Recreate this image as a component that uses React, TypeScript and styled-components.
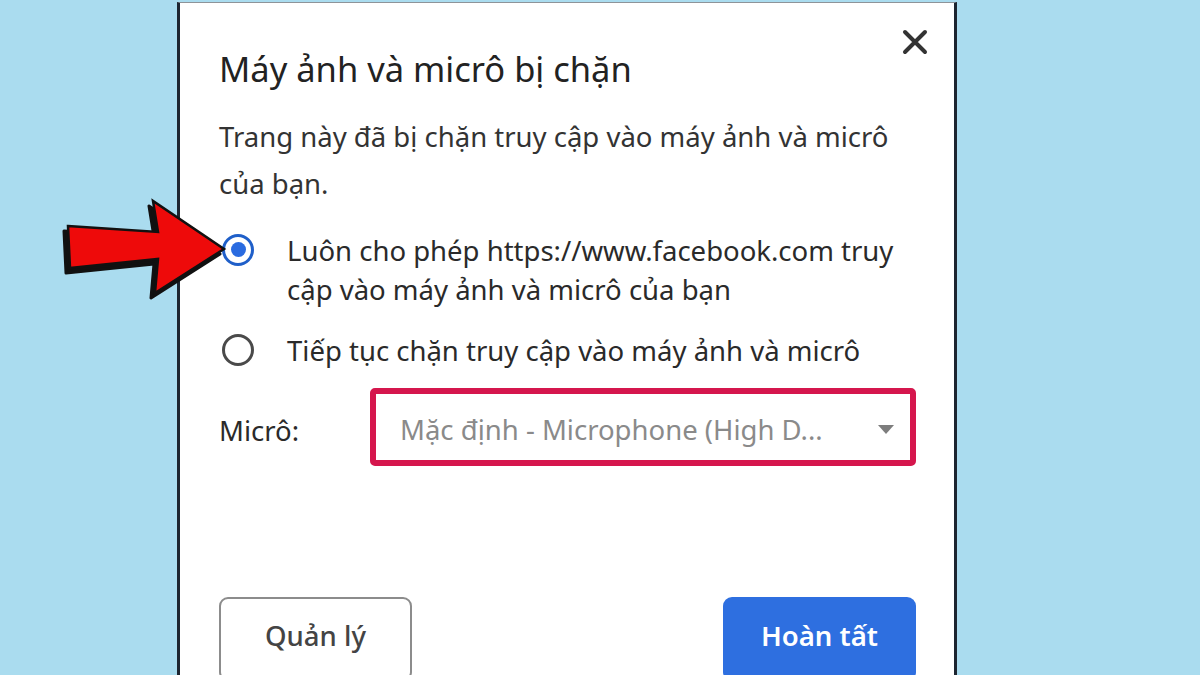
import React from "react";
import styled, { createGlobalStyle } from "styled-components";

const GlobalStyle = createGlobalStyle`
    html, body {
        margin: 0;
        padding: 0;
        background: #aadcef;
    }
    body {
        font-family: "Noto Sans", "Open Sans", Arial, sans-serif;
        color: #2b2b2b;
    }
`;

const Page = styled.div`
    position: relative;
    width: 1200px;
    height: 675px;
    overflow: hidden;
    background: #aadcef;
    display: flex;
    align-items: flex-start;
`;

// dialog runs past the bottom edge of the screenshot
const Dialog = styled.div`
    margin: 2px 0 0 177px;
    width: 780px;
    height: 700px;
    box-sizing: border-box;
    background: #fff;
    border-left: 3px solid #1d2530;
    border-right: 3px solid #1d2530;
    border-top: 1px solid #8e9499;
    padding: 0 38px 0 39px;
    display: flex;
    flex-direction: column;
`;

const Header = styled.div`
    display: flex;
    justify-content: space-between;
    align-items: flex-start;
`;

const Title = styled.h1`
    margin: 46px 0 0;
    font-size: 34.5px;
    line-height: 40px;
    font-weight: 400;
    color: #222;
`;

const CloseButton = styled.button`
    margin: 25px -13px 0 0;
    width: 28px;
    height: 28px;
    padding: 0;
    border: 0;
    background: none;
    display: flex;
    align-items: center;
    justify-content: center;
`;

const Description = styled.p`
    margin: 24px 0 0;
    font-size: 27.5px;
    line-height: 47px;
    color: #333;
`;

const Option = styled.label<{ $gap: number }>`
    margin-top: ${(p) => p.$gap}px;
    display: flex;
    align-items: flex-start;
    font-size: 27.5px;
    line-height: 39px;
    color: #2a2a2a;
`;

const RadioSlot = styled.span`
    flex: 0 0 68px;
    height: 37px;
    display: flex;
    align-items: center;
`;

const Radio = styled.span<{ $checked?: boolean }>`
    margin-left: 3px;
    width: 32px;
    height: 32px;
    box-sizing: border-box;
    border-radius: 50%;
    border: 3px solid ${(p) => (p.$checked ? "#1f5fc9" : "#4a4a4a")};
    display: flex;
    align-items: center;
    justify-content: center;
    &::after {
        content: "";
        display: ${(p) => (p.$checked ? "block" : "none")};
        width: 15px;
        height: 15px;
        border-radius: 50%;
        background: #2a6be0;
    }
`;

const OptionText = styled.span`
    flex: 1;
`;

const FieldRow = styled.div`
    margin-top: 18px;
    display: flex;
    align-items: center;
`;

const FieldLabel = styled.span`
    flex: 0 0 151px;
    font-size: 27.5px;
    color: #2a2a2a;
    padding-top: 6px;
`;

const Select = styled.div`
    width: 549px;
    height: 78px;
    box-sizing: border-box;
    border: 6px solid #d5164d;
    border-radius: 5px;
    padding: 5px 16px 0 24px;
    display: flex;
    align-items: center;
    justify-content: space-between;
    font-size: 27.5px;
    color: #8a8a8a;
`;

const Caret = styled.span`
    width: 0;
    height: 0;
    border-left: 8px solid transparent;
    border-right: 8px solid transparent;
    border-top: 9px solid #7d7d7d;
`;

const Actions = styled.div`
    margin-top: 131px;
    display: flex;
    justify-content: space-between;
`;

const Button = styled.button<{ $primary?: boolean }>`
    width: 193px;
    height: 84px;
    box-sizing: border-box;
    border-radius: 9px;
    font-family: "Noto Sans", "Open Sans", Arial, sans-serif;
    font-size: 27.5px;
    padding: 0 0 8px;
    ${(p) =>
        p.$primary
            ? `
        background: #2e6fe0;
        border: 0;
        color: #fff;
        font-weight: 600;
    `
            : `
        background: #fff;
        border: 2px solid #8c8c8c;
        color: #444;
        font-weight: 500;
    `}
`;

const Pointer = styled.svg`
    position: absolute;
    left: 60px;
    top: 195px;
`;

const arrowPoints = "8,31 98,37 93,6 164,54 95,98 98,64 10,73";

export default function App() {
    return (
        <Page>
            <GlobalStyle />
            <Dialog>
                <Header>
                    <Title>Máy ảnh và micrô bị chặn</Title>
                    <CloseButton aria-label="Đóng">
                        <svg width="26" height="26" viewBox="0 0 26 26">
                            <path d="M3 3 L23 23 M23 3 L3 23" stroke="#333" strokeWidth="4" strokeLinecap="round" />
                        </svg>
                    </CloseButton>
                </Header>
                <Description>
                    Trang này đã bị chặn truy cập vào máy ảnh và micrô
                    <br />
                    của bạn.
                </Description>
                <Option $gap={24}>
                    <RadioSlot>
                        <Radio $checked />
                    </RadioSlot>
                    <OptionText>
                        Luôn cho phép https://www.facebook.com truy
                        <br />
                        cập vào máy ảnh và micrô của bạn
                    </OptionText>
                </Option>
                <Option $gap={22}>
                    <RadioSlot>
                        <Radio />
                    </RadioSlot>
                    <OptionText>Tiếp tục chặn truy cập vào máy ảnh và micrô</OptionText>
                </Option>
                <FieldRow>
                    <FieldLabel>Micrô:</FieldLabel>
                    <Select>
                        <span>Mặc định - Microphone (High D...</span>
                        <Caret />
                    </Select>
                </FieldRow>
                <Actions>
                    <Button>Quản lý</Button>
                    <Button $primary>Hoàn tất</Button>
                </Actions>
            </Dialog>
            <Pointer width="175" height="110" viewBox="0 0 175 110">
                <polygon points={arrowPoints} transform="translate(-4 5)" fill="#111" stroke="#111" strokeWidth="3" strokeLinejoin="round" />
                <polygon points={arrowPoints} fill="#ee0a0a" stroke="#111" strokeWidth="2.5" strokeLinejoin="miter" />
            </Pointer>
        </Page>
    );
}
